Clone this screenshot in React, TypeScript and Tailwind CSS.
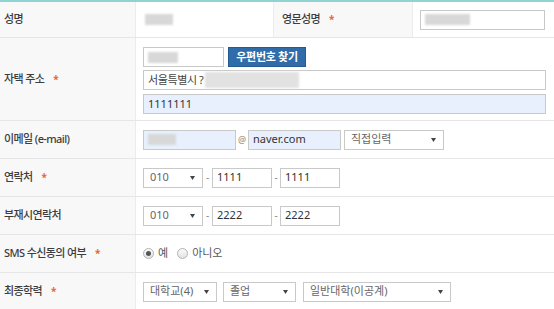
import type { ReactNode } from 'react';

const FONT = "font-['Noto_Sans','Noto_Sans_CJK_KR',sans-serif]";

function Star() {
  return <span className="ml-[9px] text-[10px] font-bold text-[#e8662a]">*</span>;
}

function Label({ children, req, className = '' }: { children: ReactNode; req?: boolean; className?: string }) {
  return (
    <div
      className={`flex shrink-0 items-center bg-[#f8f8f8] text-[11px] font-medium tracking-[-0.6px] text-[#3d3d3d] ${className}`}
    >
      {children}
      {req && <Star />}
    </div>
  );
}

function Input({ w, value, fill, children }: { w: string; value?: string; fill?: boolean; children?: ReactNode }) {
  return (
    <div
      className={`flex h-[20px] items-center border border-[#c9c9c9] pl-[4px] text-[11px] text-[#333] ${w} ${
        fill ? 'bg-[#e8f0fe]' : 'bg-white'
      }`}
    >
      {value}
      {children}
    </div>
  );
}

function Blur({ w }: { w: string }) {
  return <span className={`block h-[11px] bg-[#d8d8d8] blur-[1px] ${w}`} />;
}

function Select({ w, value }: { w: string; value: string }) {
  return (
    <div
      className={`flex h-[20px] items-center justify-between border border-[#c9c9c9] bg-white pl-[6px] pr-[7px] text-[11px] text-[#666] ${w}`}
    >
      <span>{value}</span>
      <svg width="5" height="4" viewBox="0 0 5 4">
        <path d="M0 0h5L2.5 4z" fill="#444" />
      </svg>
    </div>
  );
}

function Dash({ w }: { w: string }) {
  return <span className={`text-center text-[10px] text-[#888] ${w}`}>-</span>;
}

function Radio({ checked, label }: { checked?: boolean; label: string }) {
  return (
    <label className="flex items-center gap-[4px] text-[11px] text-[#555]">
      <span className="flex h-[11px] w-[11px] items-center justify-center rounded-full border border-[#b3b3b3] bg-gradient-to-b from-[#fafafa] to-[#e4e4e4]">
        {checked && <span className="h-[5px] w-[5px] rounded-full bg-[#555]" />}
      </span>
      {label}
    </label>
  );
}

function Row({ h, children }: { h: string; children: ReactNode }) {
  return <div className={`flex border-b border-[#e6e6e6] ${h}`}>{children}</div>;
}

export default function App() {
  const lbl = 'w-[136px] border-r border-[#ececec] pl-[4px]';
  const val = 'flex flex-1 items-center pl-[7px]';

  return (
    <div className={`h-[309px] w-[554px] overflow-hidden border-t-2 border-[#8fd3d3] bg-white ${FONT}`}>
      {/* 성명 / 영문성명 */}
      <Row h="h-[36px]">
        <Label className={lbl}>성명</Label>
        <div className="flex w-[137px] items-center pl-[9px]">
          <Blur w="w-[28px]" />
        </div>
        <Label req className="w-[140px] border-x border-[#ececec] pl-[8px]">
          영문성명
        </Label>
        <div className={val}>
          <Input w="w-[125px]">
            <Blur w="w-[45px]" />
          </Input>
        </div>
      </Row>

      {/* 자택 주소 */}
      <Row h="h-[83px]">
        <Label req className={lbl}>
          자택 주소
        </Label>
        <div className="flex flex-1 flex-col pl-[7px] pr-[8px] pt-[9px]">
          <div className="flex items-center gap-[4px]">
            <Input w="w-[81px]">
              <Blur w="w-[30px]" />
            </Input>
            <button className="h-[20px] w-[78px] border border-[#255b90] bg-[#2f6ca9] text-[11px] font-bold tracking-[-0.3px] text-white">
              우편번호 찾기
            </button>
          </div>
          <div className="mt-[3px]">
            <Input w="w-full">
              <span className="tracking-[-0.4px] text-[#444]">서울특별시 ?</span>
              <span className="ml-[2px] block h-[16px] w-[94px] bg-[#e2e2e2] blur-[1px]" />
            </Input>
          </div>
          <div className="mt-[4px]">
            <Input w="w-full" fill value="1111111" />
          </div>
        </div>
      </Row>

      {/* 이메일 */}
      <Row h="h-[38px]">
        <Label className={lbl}>이메일 (e-mail)</Label>
        <div className={val}>
          <Input w="w-[93px]" fill>
            <Blur w="w-[28px]" />
          </Input>
          <span className="w-[12px] text-center text-[9px] text-[#888]">@</span>
          <Input w="w-[93px]" fill value="naver.com" />
          <div className="ml-[3px]">
            <Select w="w-[100px]" value="직접입력" />
          </div>
        </div>
      </Row>

      {/* 연락처 */}
      <Row h="h-[38px]">
        <Label req className={lbl}>
          연락처
        </Label>
        <div className={val}>
          <Select w="w-[60px]" value="010" />
          <Dash w="w-[9px]" />
          <Input w="w-[60px]" value="1111" />
          <Dash w="w-[8px]" />
          <Input w="w-[60px]" value="1111" />
        </div>
      </Row>

      {/* 부재시연락처 */}
      <Row h="h-[38px]">
        <Label className={lbl}>부재시연락처</Label>
        <div className={val}>
          <Select w="w-[60px]" value="010" />
          <Dash w="w-[9px]" />
          <Input w="w-[60px]" value="2222" />
          <Dash w="w-[8px]" />
          <Input w="w-[60px]" value="2222" />
        </div>
      </Row>

      {/* SMS */}
      <Row h="h-[38px]">
        <Label req className={lbl}>
          SMS 수신동의 여부
        </Label>
        <div className={`${val} gap-[9px]`}>
          <Radio checked label="예" />
          <Radio label="아니오" />
        </div>
      </Row>

      {/* 최종학력 */}
      <Row h="h-[38px]">
        <Label req className={lbl}>
          최종학력
        </Label>
        <div className={val}>
          <Select w="w-[74px]" value="대학교(4)" />
          <div className="ml-[6px]">
            <Select w="w-[73px]" value="졸업" />
          </div>
          <div className="ml-[7px]">
            <Select w="w-[148px]" value="일반대학(이공계)" />
          </div>
        </div>
      </Row>
    </div>
  );
}
